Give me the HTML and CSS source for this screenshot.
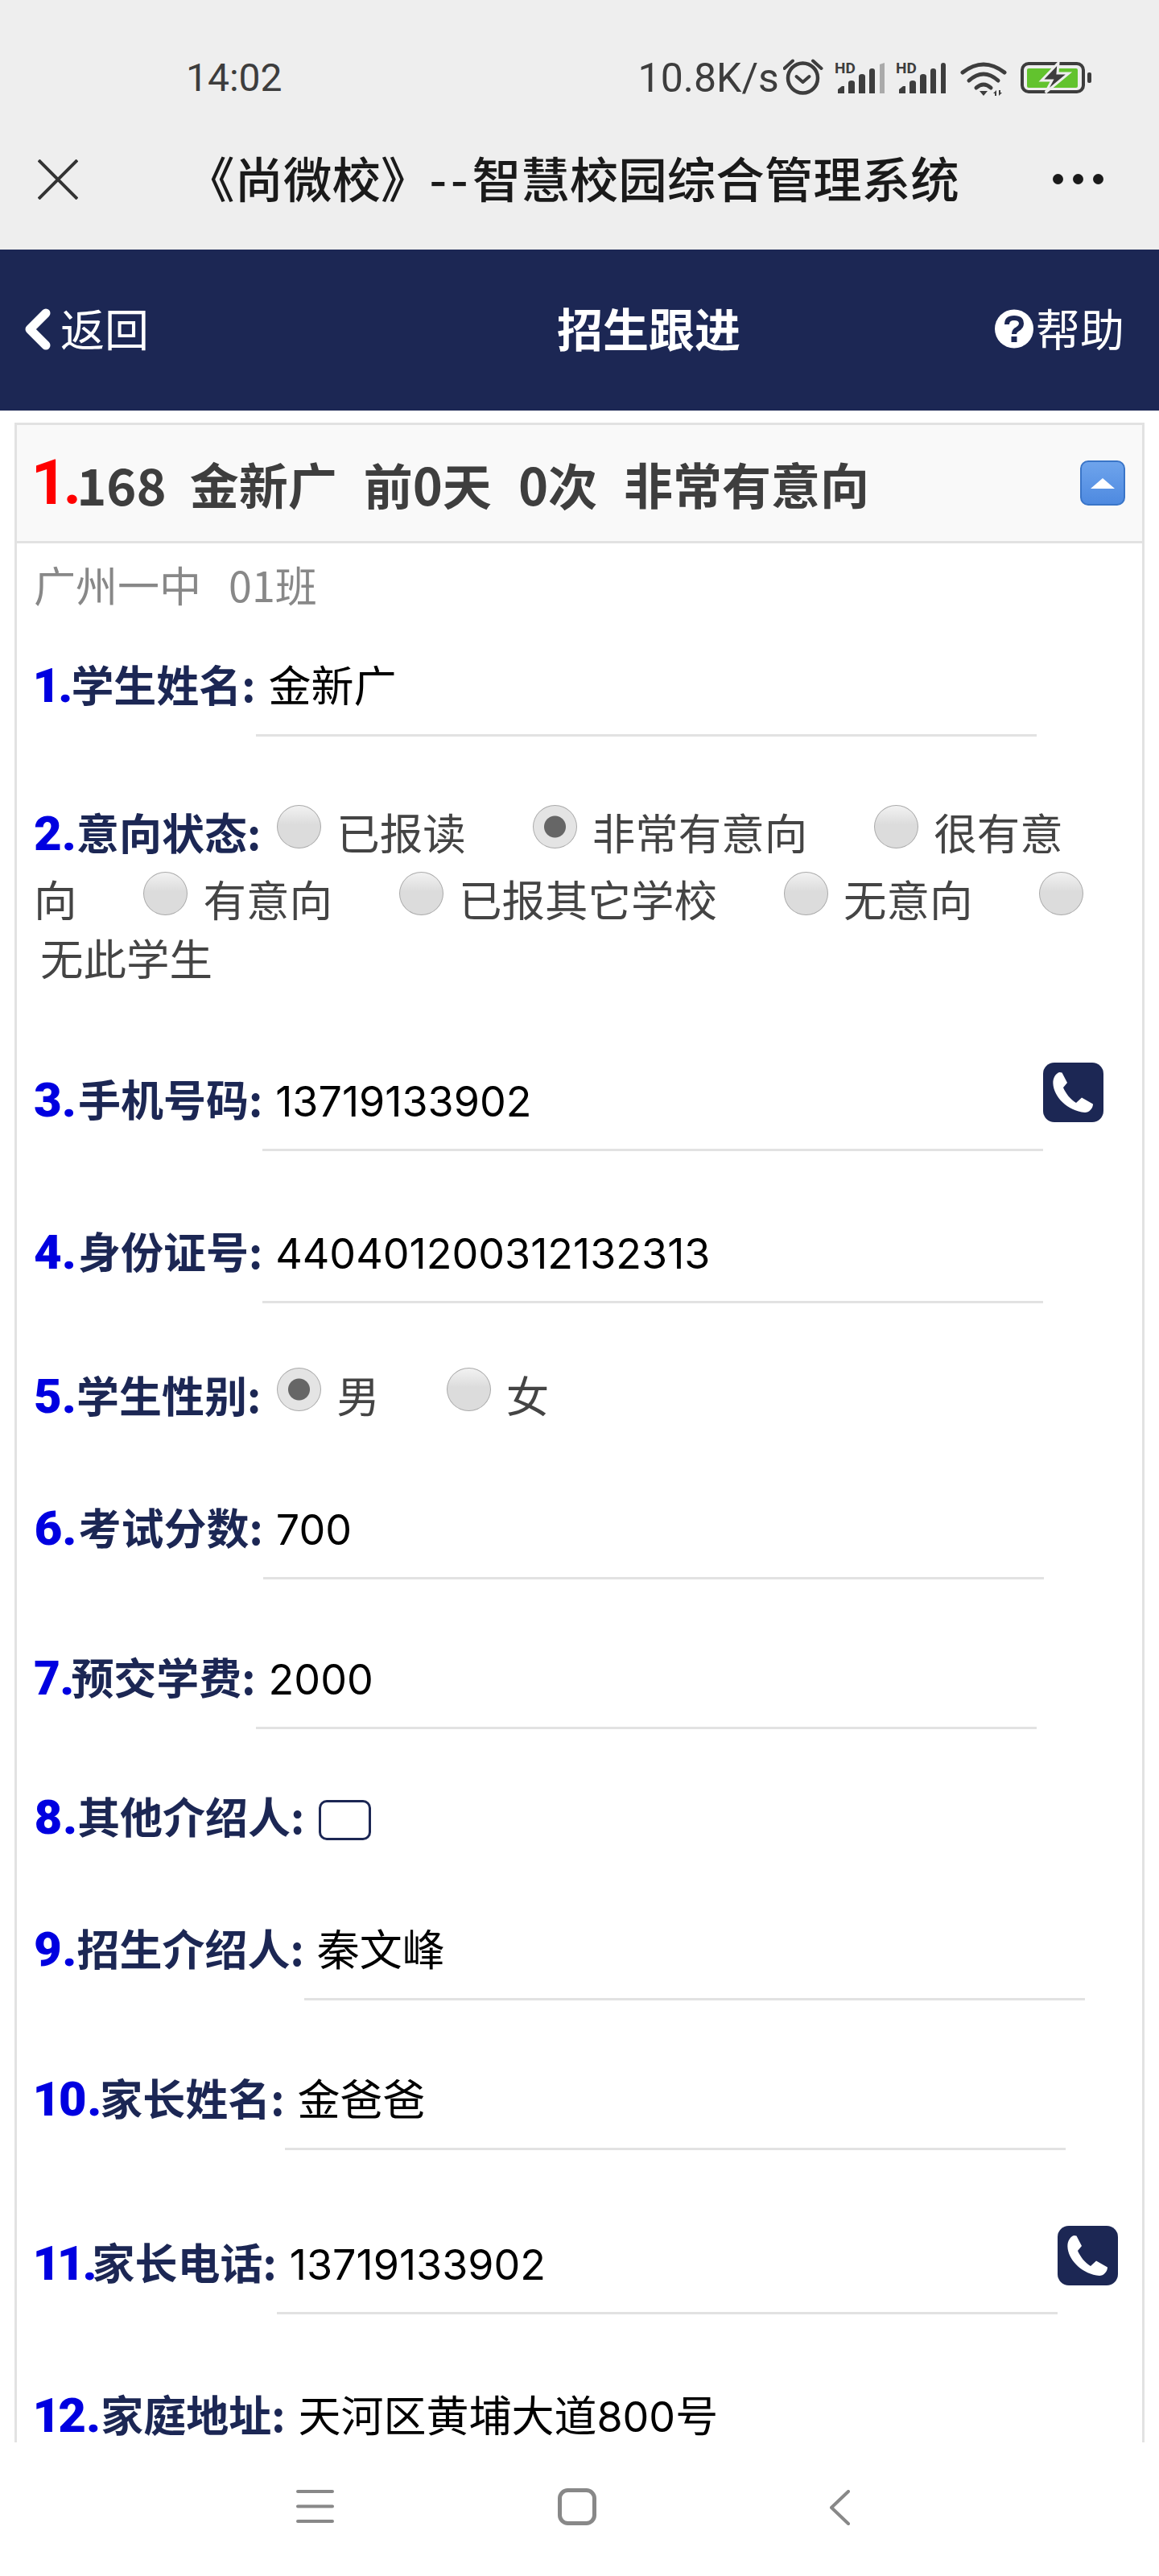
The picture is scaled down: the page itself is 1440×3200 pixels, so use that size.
FILE: index.html
```html
<!DOCTYPE html>
<html lang="en">
<head>
  <meta charset="UTF-8">
  <title>招生跟进</title>
  <link rel="stylesheet" href="styles.css">
</head>
<body>
  <svg class="defs" width="0" height="0">
    <symbol id="phone" viewBox="0 0 75 74">
      <path fill="#fff" d="M12.4 26C12 19 16 13 20.5 12L23.5 12.5L30 25L25 31C28 38 34 46 41 50L48 43.5L62 51.5C62 57 57 62 52 62C30 60 13 42 12.4 26Z"/>
    </symbol>
  </svg>

  <div class="top-bar">
    <div class="status-bar">
      <span class="time">14:02</span>
      <span class="speed">10.8K/s</span>
      <svg class="icon-clock" width="50" height="46" viewBox="0 0 50 46" fill="none" stroke="#3d3d3d" stroke-linecap="round" stroke-linejoin="round">
        <circle cx="24.500" cy="24" r="18.500" stroke-width="4.500"/>
        <path stroke-width="4" d="M16.500 22L24.500 29L32.500 22"/>
        <path stroke-width="4" d="M1.500 12L12 2.500M37 2.500L47.500 12"/>
      </svg>
      <svg class="icon-signal" width="63" height="40" viewBox="0 0 63 40" fill="#3d3d3d">
        <text x="0" y="14" class="hd">HD</text>
        <path d="M4 39V34L9 30H12V39ZM17 39V26Q17 23 21 23Q25 23 25 26V39ZM30 39V18Q30 15 34 15Q38 15 38 18V39ZM43 39V11Q43 8 46.500 8Q50 8 50 11V39Z"/>
        <path fill="#aaa" d="M56 39V3L62 1V39Z"/>
      </svg>
      <svg class="icon-signal second" width="63" height="40" viewBox="0 0 63 40" fill="#3d3d3d">
        <text x="0" y="14" class="hd">HD</text>
        <path d="M4 39V34L9 30H12V39ZM17 39V26Q17 23 21 23Q25 23 25 26V39ZM30 39V18Q30 15 34 15Q38 15 38 18V39ZM43 39V11Q43 8 46.500 8Q50 8 50 11V39ZM56 39V4Q56 1 59 1Q62 1 62 4V39Z"/>
      </svg>
      <svg class="icon-wifi" width="58" height="44" viewBox="0 0 58 44" fill="none" stroke="#3d3d3d" stroke-width="5" stroke-linecap="round">
        <path d="M3 14Q29 -6 55 14"/>
        <path d="M11 24Q29 8 47 24"/>
        <path d="M20 33Q29 25 38 33"/>
        <path fill="#3d3d3d" stroke="none" d="M24 37H34L29 43ZM41 40L45 36V43H43V40ZM48 36H50V39H52L48 43Z"/>
      </svg>
      <svg class="icon-battery" width="88" height="40" viewBox="0 0 88 40">
        <rect x="2" y="2" width="76" height="35" rx="8" fill="none" stroke="#3d3d3d" stroke-width="4"/>
        <rect x="8" y="8" width="63" height="24" rx="2" fill="#62c32e"/>
        <rect x="83" y="13" width="5" height="13" rx="2" fill="#3d3d3d"/>
        <path fill="#3d3d3d" stroke="#eee" stroke-width="3" d="M47 1L26 23H39L31 38L60 14H46Z"/>
      </svg>
    </div>
    <div class="title-bar">
      <svg class="icon-close" width="50" height="50" viewBox="0 0 50 50" fill="none" stroke="#333" stroke-width="4"><path d="M1 1L49 49M49 1L1 49"/></svg>
      <span class="app-title">《尚微校》<span class="dash">--</span>智慧校园综合管理系统</span>
      <div class="dots"><i></i><i></i><i></i></div>
    </div>
  </div>

  <div class="nav">
    <svg class="icon-back" width="34" height="52" viewBox="0 0 34 52" fill="none" stroke="#fff" stroke-width="11" stroke-linecap="round" stroke-linejoin="round"><path d="M27 6L7 26L27 46"/></svg>
    <span class="nav-link">返回</span>
    <span class="nav-title">招生跟进</span>
    <svg class="icon-help" width="48" height="49" viewBox="0 0 48 49">
      <circle cx="24" cy="24.500" r="24" fill="#fff"/>
      <path fill="none" stroke="#1c2754" stroke-width="6" d="M15 19Q15 11 24 11Q33 11 33 18Q33 22 28 25Q24 27 24 31"/>
      <rect x="20.500" y="34" width="7" height="7" fill="#1c2754"/>
    </svg>
    <span class="nav-link">帮助</span>
  </div>

  <div class="main">
    <div class="card">
      <div class="card-head">
        <span class="head-index">1.</span><span class="head-num">168</span>
        <span class="head-text spaced">金新广</span>
        <span class="head-text spaced">前<span class="head-num">0</span>天</span>
        <span class="head-text spaced"><span class="head-num">0</span>次</span>
        <span class="head-text spaced">非常有意向</span>
        <span class="toggle"><i></i></span>
      </div>
      <div class="card-body">
        <div class="sub">广州一中<span class="sub-class">01班</span></div>

        <div class="row row-name">
          <span class="label"><b>1.</b>学生姓名:</span>
          <div class="field">金新广</div>
        </div>

        <div class="choices row-status">
          <span class="label"><b>2.</b>意向状态:</span>
          <input class="radio first" type="radio" name="status"><span class="opt">已报读</span>
          <input class="radio" type="radio" name="status" checked><span class="opt">非常有意向</span>
          <input class="radio" type="radio" name="status"><span class="opt">很有意向</span>
          <input class="radio" type="radio" name="status"><span class="opt">有意向</span>
          <input class="radio" type="radio" name="status"><span class="opt">已报其它学校</span>
          <input class="radio" type="radio" name="status"><span class="opt">无意向</span>
          <input class="radio" type="radio" name="status"><span class="opt last">无此学生</span>
        </div>

        <div class="row row-phone">
          <span class="label"><b>3.</b>手机号码:</span>
          <div class="field"><span class="num">13719133902</span></div>
          <span class="call"><svg width="75" height="74"><use href="#phone"/></svg></span>
        </div>

        <div class="row row-idcard">
          <span class="label"><b>4.</b>身份证号:</span>
          <div class="field"><span class="num">440401200312132313</span></div>
        </div>

        <div class="choices row-gender">
          <span class="label"><b>5.</b>学生性别:</span>
          <input class="radio first" type="radio" name="gender" checked><span class="opt">男</span>
          <input class="radio" type="radio" name="gender"><span class="opt">女</span>
        </div>

        <div class="row row-score">
          <span class="label"><b>6.</b>考试分数:</span>
          <div class="field"><span class="num">700</span></div>
        </div>

        <div class="row row-fee">
          <span class="label"><b>7.</b>预交学费:</span>
          <div class="field"><span class="num">2000</span></div>
        </div>

        <div class="row row-other">
          <span class="label"><b>8.</b>其他介绍人:</span>
          <span class="checkbox"></span>
        </div>

        <div class="row row-referrer">
          <span class="label"><b>9.</b>招生介绍人:</span>
          <div class="field">秦文峰</div>
        </div>

        <div class="row row-parent">
          <span class="label"><b>10.</b>家长姓名:</span>
          <div class="field">金爸爸</div>
        </div>

        <div class="row row-parent-phone">
          <span class="label"><b>11.</b>家长电话:</span>
          <div class="field"><span class="num">13719133902</span></div>
          <span class="call"><svg width="75" height="74"><use href="#phone"/></svg></span>
        </div>

        <div class="row row-address">
          <span class="label"><b>12.</b>家庭地址:</span>
          <div class="field">天河区黄埔大道<span class="num">800</span>号</div>
        </div>
      </div>
    </div>
  </div>

  <div class="bottom-bar">
    <svg class="icon-menu" width="47" height="41" viewBox="0 0 47 41" fill="none" stroke="#888" stroke-width="4" stroke-linecap="round"><path d="M2 2H45M2 20.500H45M2 39H45"/></svg>
    <svg class="icon-home" width="48" height="46" viewBox="0 0 48 46" fill="none" stroke="#888" stroke-width="5"><rect x="2.500" y="2.500" width="43" height="41" rx="10"/></svg>
    <svg class="icon-return" width="25" height="44" viewBox="0 0 25 44" fill="none" stroke="#888" stroke-width="4" stroke-linecap="round" stroke-linejoin="round"><path d="M23 2L2 22L23 42"/></svg>
  </div>
</body>
</html>
```

FILE: styles.css
```css
* {
  box-sizing: border-box;
}

body {
  margin: 0;
  width: 1440px;
  height: 3200px;
  overflow: hidden;
  display: flex;
  flex-direction: column;
  background-color: #fff;
  font-family: "Noto Sans CJK SC", "Noto Sans", sans-serif;
}

.defs {
  display: block;
  height: 0;
}

/* system bar + browser title */
.top-bar {
  height: 310px;
  background-color: #eee;
  flex: none;
}

.status-bar {
  height: 190px;
  padding-top: 73px;
  display: flex;
  align-items: flex-start;
  color: #3d3d3d;
}

.time, .speed {
  font-family: Roboto, sans-serif;
  font-size: 48px;
  line-height: 50px;
  margin-top: -1px;
}

.time {
  margin-left: 231px;
}

.speed {
  font-size: 50px;
  margin-left: 442px;
}

.icon-clock {
  margin-left: 5px;
}

.icon-signal {
  margin-left: 14px;
  margin-top: 4px;
}

.icon-signal.second {
  margin-left: 13px;
}

.hd {
  font-family: Roboto, sans-serif;
  font-size: 19px;
  font-weight: 700;
}

.icon-wifi {
  margin-left: 17px;
  margin-top: 3px;
}

.icon-battery {
  margin-left: 17px;
  margin-top: 4px;
}

.title-bar {
  height: 120px;
  display: flex;
  align-items: flex-start;
}

.icon-close {
  margin-left: 47px;
  margin-top: 8px;
}

.app-title {
  margin-left: 134px;
  margin-top: -2px;
  font-size: 60.5px;
  line-height: 64px;
  font-weight: 500;
  color: #1a1a1a;
}

.dash {
  letter-spacing: 5px;
}

.dots {
  margin-left: auto;
  margin-right: 69px;
  margin-top: 26px;
  display: flex;
  gap: 12px;
}

.dots i {
  width: 13px;
  height: 13px;
  border-radius: 50%;
  background-color: #1a1a1a;
}

/* dark header */
.nav {
  height: 200px;
  flex: none;
  display: flex;
  align-items: center;
  padding: 0 43px 8px 30px;
  background-color: #1c2754;
  color: #fff;
}

.nav-link {
  font-size: 55px;
  line-height: 64px;
}

.icon-back {
  margin-right: 11px;
  margin-top: 6px;
}

.nav-title {
  margin-left: 507px;
  margin-right: auto;
  font-size: 57px;
  line-height: 64px;
  font-weight: 700;
}

.icon-help {
  margin-right: 3px;
  margin-top: 4px;
}

/* form card */
.main {
  flex: 1;
  overflow: hidden;
  padding: 15px 18px 0;
}

.card {
  border: 3px solid #e2e2e2;
  height: 2600px;
}

.card-head {
  height: 147px;
  padding: 0 21px 0 20px;
  display: flex;
  align-items: center;
  background-color: #f9f9f9;
  border-bottom: 3px solid #e2e2e2;
}

.head-index {
  font-family: Roboto, sans-serif;
  font-variant-numeric: proportional-nums;
  font-size: 78px;
  font-weight: 700;
  color: #f00;
  line-height: 90px;
}

.head-num {
  font-size: 63px;
  font-weight: 700;
  color: #3e3e3e;
  line-height: 90px;
  margin-top: 2px;
}

.head-index + .head-num {
  margin-left: -6px;
}

.head-text {
  font-size: 61px;
  font-weight: 700;
  color: #3e3e3e;
  line-height: 90px;
  margin-top: 2px;
}

.head-text.spaced {
  margin-left: 33px;
}

.head-num + .head-text.spaced {
  margin-left: 29px;
}

.toggle {
  margin-left: auto;
  width: 56px;
  height: 56px;
  border: 2px solid #3a75c8;
  border-radius: 10px;
  background: linear-gradient(#6ea4ec, #4e8ae0);
  display: flex;
  align-items: center;
  justify-content: center;
}

.toggle i {
  width: 0;
  height: 0;
  border-left: 15px solid transparent;
  border-right: 15px solid transparent;
  border-bottom: 13px solid #fff;
}

.card-body {
  padding: 20px 21px 0;
}

.sub {
  font-size: 52px;
  line-height: 62px;
  color: #888;
}

.sub-class {
  margin-left: 34px;
}

.row {
  display: flex;
  align-items: flex-start;
}

.label {
  flex: none;
  font-size: 53px;
  line-height: 62px;
  font-weight: 700;
  color: #1c2754;
}

.label b {
  font-family: Roboto, sans-serif;
  font-variant-numeric: proportional-nums;
  font-size: 60px;
  color: #0000e0;
}

.field {
  flex: none;
  width: 970px;
  height: 97px;
  padding-left: 16px;
  font-size: 53px;
  line-height: 62px;
  color: #000;
  border-bottom: 3px solid #e2e2e2;
}

.num {
  font-family: Inter, sans-serif;
  font-size: 52px;
}

.call {
  flex: none;
  width: 75px;
  height: 74px;
  margin-top: -13px;
  border-radius: 14px;
  background-color: #1c2754;
}

.call svg {
  display: block;
}

.choices {
  font-size: 53.5px;
  line-height: 73px;
  color: #444;
}

.choices .label {
  font-size: 53px;
  line-height: 73px;
}

.radio {
  appearance: none;
  width: 55px;
  height: 54px;
  margin: 11px 0 0 71px;
  vertical-align: 2px;
  border: 1px solid #aaa;
  border-radius: 50%;
  background: linear-gradient(#f2f2f2, #dcdcdc 45%);
}

.radio.first {
  margin-left: 8px;
}

.radio:checked {
  background: radial-gradient(circle, #666 0 13px, #e4e4e4 14px);
}

.opt {
  margin-left: 19px;
}

.opt.last {
  margin-left: 8px;
}

.checkbox {
  width: 65px;
  height: 50px;
  margin-left: 18px;
  margin-top: 12px;
  border: 3px solid #1c2754;
  border-radius: 10px;
}

.row-name { margin-top: 61px; }
.row-status { margin-top: 74px; padding-right: 45px; }
.row-phone { margin-top: 108px; }
.row-idcard { margin-top: 92px; }
.row-gender { margin-top: 69px; }
.row-score { margin-top: 94px; }
.row-fee { margin-top: 89px; }
.row-other { margin-top: 76px; }
.row-referrer { margin-top: 99px; }
.row-parent { margin-top: 89px; }
.row-parent-phone { margin-top: 107px; }
.row-address { margin-top: 92px; }

/* the index digits aren't the same width on every row */
.row-name b { margin-right: -2px; }
.row-phone b { margin-right: 2px; }
.row-idcard b { margin-right: 2px; }
.row-score b { margin-right: 2px; }
.row-fee b { margin-right: -4px; }
.row-parent b { margin-right: -2px; }
.row-parent-phone b { margin-right: -6px; }

/* android nav buttons */
.bottom-bar {
  height: 166px;
  flex: none;
  display: flex;
  align-items: flex-start;
  padding: 59px 0 0 368px;
  background-color: #fff;
}

.icon-home {
  margin-left: 278px;
  margin-top: -2px;
}

.icon-return {
  margin-left: 290px;
}
```
